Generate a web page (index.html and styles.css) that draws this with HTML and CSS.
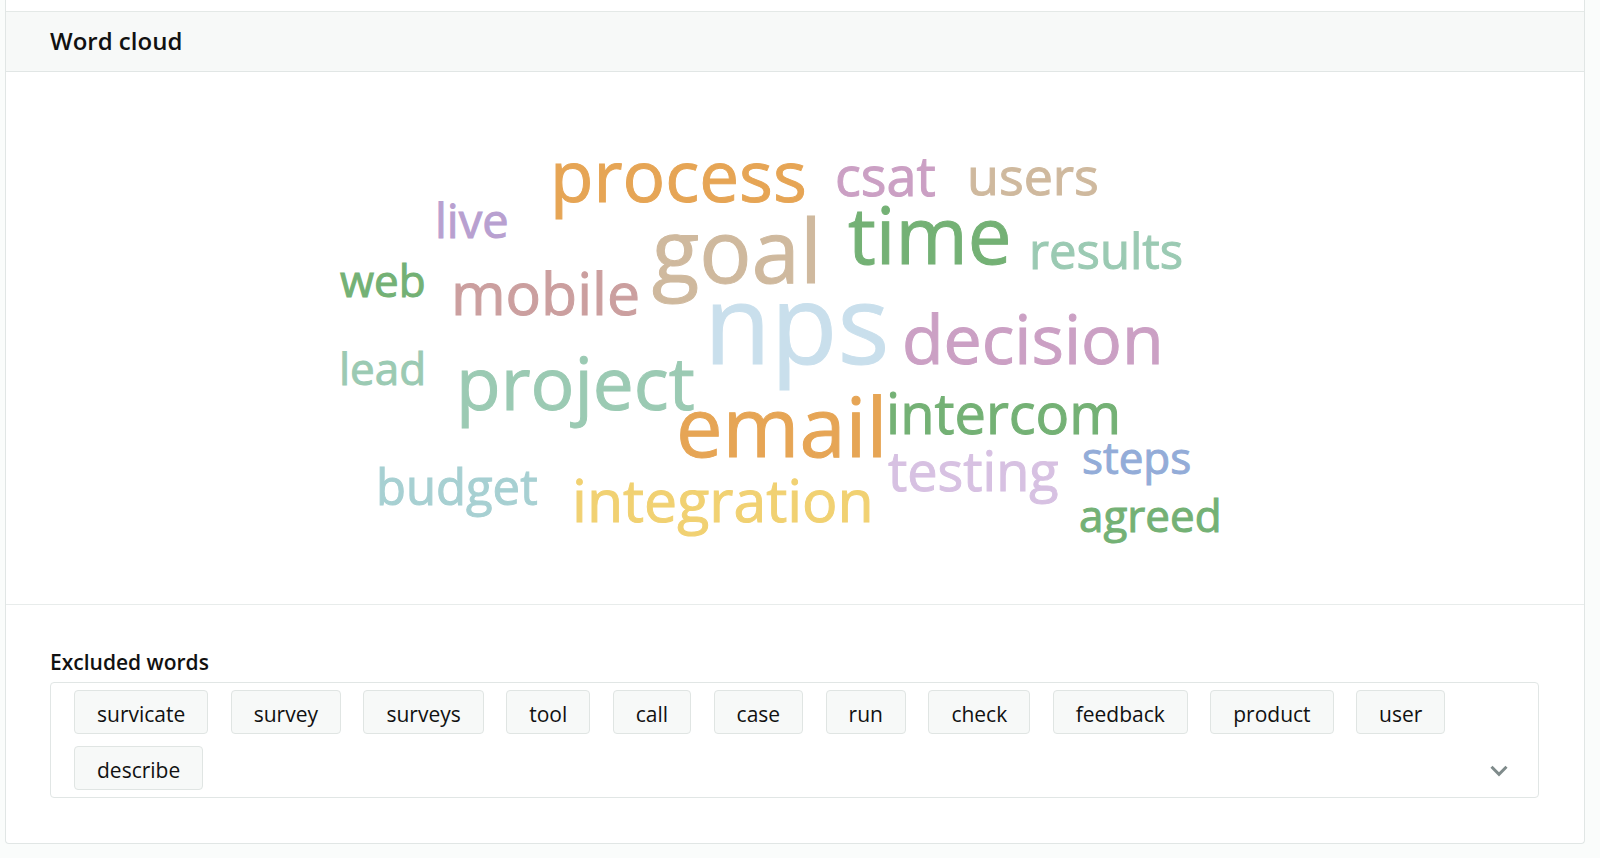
FILE: index.html
```html
<!DOCTYPE html>
<html lang="en">
<head>
<meta charset="utf-8">
<meta name="viewport" content="width=device-width, initial-scale=1">
<title>Word cloud</title>
<link rel="stylesheet" href="styles.css">
</head>
<body>
<main class="panel">
  <header class="panel-header">
    <h2 class="panel-title">Word cloud</h2>
  </header>
  <svg class="cloud" viewBox="0 0 1578 532" role="img" aria-label="Word cloud of answers">
    <text class="orange" x="544" y="130" font-size="71">process</text>
    <text class="pink" x="829" y="124" font-size="54">csat</text>
    <text class="tan" x="961" y="123" font-size="52">users</text>
    <text class="purple" x="429" y="166" font-size="47">live</text>
    <text class="tan" x="646" y="211" font-size="87">goal</text>
    <text class="green" x="842" y="192" font-size="78">time</text>
    <text class="mint" x="1023" y="197" font-size="49">results</text>
    <text class="green" x="334" y="225" font-size="44">web</text>
    <text class="rose" x="445" y="243" font-size="59">mobile</text>
    <text class="sky" x="698" y="292" font-size="109">nps</text>
    <text class="pink" x="896" y="292" font-size="68">decision</text>
    <text class="mint" x="333" y="313" font-size="44">lead</text>
    <text class="mint" x="450" y="338" font-size="73">project</text>
    <text class="orange" x="670" y="385" font-size="83">email</text>
    <text class="green" x="880" y="362" font-size="56">intercom</text>
    <text class="lilac" x="882" y="419" font-size="54">testing</text>
    <text class="blue" x="1076" y="402" font-size="44">steps</text>
    <text class="teal" x="370" y="433" font-size="49">budget</text>
    <text class="yellow" x="566" y="450" font-size="59">integration</text>
    <text class="green" x="1073" y="460" font-size="44">agreed</text>
  </svg>
  <section class="excluded">
    <h3 class="excluded-title" id="excluded-title">Excluded words</h3>
    <div class="field">
      <ul class="chips" aria-labelledby="excluded-title">
        <li class="chip">survicate</li>
        <li class="chip">survey</li>
        <li class="chip">surveys</li>
        <li class="chip">tool</li>
        <li class="chip">call</li>
        <li class="chip">case</li>
        <li class="chip">run</li>
        <li class="chip">check</li>
        <li class="chip">feedback</li>
        <li class="chip">product</li>
        <li class="chip">user</li>
        <li class="chip">describe</li>
      </ul>
      <button class="toggle" type="button" aria-label="Show options">
        <svg width="18" height="12" viewBox="0 0 18 12" aria-hidden="true"><path d="M1.5 1.8 9 9.3l7.5-7.5" fill="none" stroke="currentColor" stroke-width="3"/></svg>
      </button>
    </div>
  </section>
</main>
</body>
</html>
```

FILE: styles.css
```css
* {
  box-sizing: border-box;
}

body {
  margin: 0;
  padding: 0 15px 14px 5px;
  background: #fafcfb;
  color: #111;
  font-family: "Open Sans", "Noto Sans", sans-serif;
}

.panel {
  padding-top: 11px;
  background: #fff;
  border: 1px solid #e1e6e5;
  border-top: 0;
  border-radius: 0 0 4px 4px;
}

.panel-header {
  padding: 12px 44px 14px;
  background: #f7f9f8;
  border-top: 1px solid #e4e9e7;
  border-bottom: 1px solid #e1e6e5;
}

.panel-title {
  margin: 0;
  font-size: 24px;
  font-weight: 600;
  line-height: 33px;
}

.cloud {
  display: block;
  width: 100%;
  height: auto;
  stroke-width: 1px;
}

.orange { fill: #e6a555; stroke: #e6a555; }
.pink { fill: #cba0c4; stroke: #cba0c4; }
.tan { fill: #cfb99e; stroke: #cfb99e; }
.purple { fill: #b8a0d0; stroke: #b8a0d0; }
.green { fill: #74b175; stroke: #74b175; }
.mint { fill: #9bcab3; stroke: #9bcab3; }
.rose { fill: #cb9f9f; stroke: #cb9f9f; }
.sky { fill: #c9dfec; stroke: #c9dfec; }
.lilac { fill: #d7c1e2; stroke: #d7c1e2; }
.blue { fill: #93acd8; stroke: #93acd8; }
.teal { fill: #a7d0d2; stroke: #a7d0d2; }
.yellow { fill: #f1d172; stroke: #f1d172; }

.excluded {
  padding: 42px 45px 45px 44px;
  border-top: 1px solid #e8eceb;
}

.excluded-title {
  margin: 0 0 5px;
  font-size: 21px;
  font-weight: 600;
  line-height: 30px;
}

.field {
  display: flex;
  align-items: flex-end;
  padding: 1px 23px;
  border: 1px solid #e1e6e5;
  border-radius: 4px;
}

.chips {
  flex: 1;
  margin: 0;
  padding: 0;
  font-size: 21px;
  line-height: 30px;
  list-style: none;
}

.chip {
  display: inline-block;
  margin: 6px 17px 6px 0;
  padding: 8px 22px 4px;
  background: #f7f9f8;
  border: 1px solid #e0e5e3;
  border-radius: 4px;
  vertical-align: top;
}

.toggle {
  display: flex;
  align-items: center;
  justify-content: center;
  width: 32px;
  height: 50px;
  padding: 0;
  border: 0;
  background: none;
  color: #7f8b8b;
}
```
